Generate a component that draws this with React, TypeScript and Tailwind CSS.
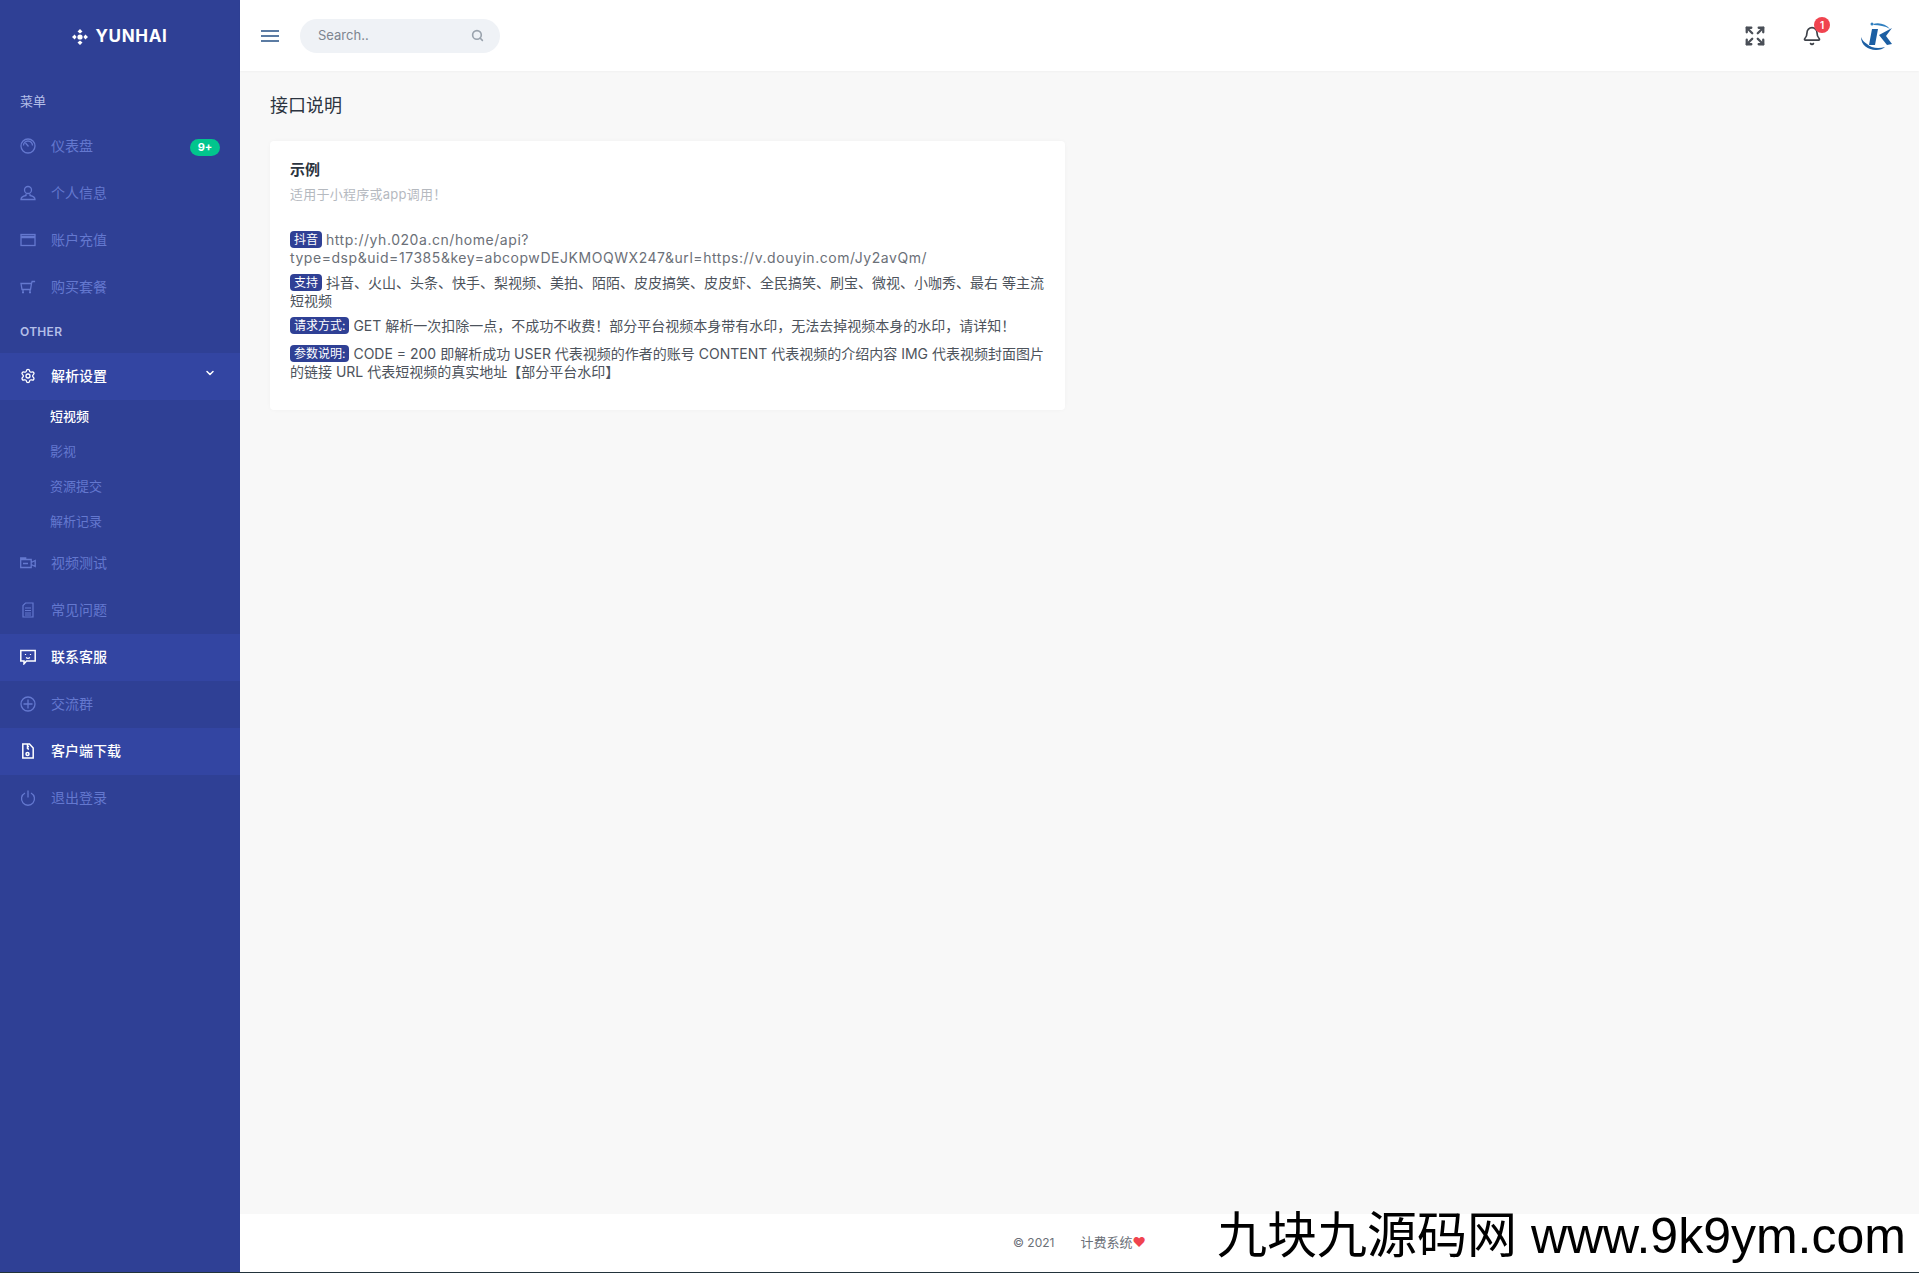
import { Bell, ChevronDown, Expand, Search, Settings } from 'lucide-react';

const sans = 'font-["Inter","Noto_Sans_CJK_SC",sans-serif]';

type IconProps = { className?: string };

const Meter = ({ className }: IconProps) => (
  <svg viewBox="0 0 16 16" fill="none" stroke="currentColor" strokeWidth="1.300" className={className}>
    <circle cx="8" cy="8" r="7" />
    <path d="M3.500 7.500a4.500 4.500 0 0 1 9 0M8.500 8.500L5.500 5" />
  </svg>
);
const User = ({ className }: IconProps) => (
  <svg viewBox="0 0 16 16" fill="none" stroke="currentColor" strokeWidth="1.300" className={className}>
    <circle cx="8" cy="5" r="3.500" />
    <path d="M6 9v1.500c-2.500.5-5 1.500-5 4h14c0-2.500-2.500-3.500-5-4V9" />
  </svg>
);
const Card = ({ className }: IconProps) => (
  <svg viewBox="0 0 16 16" fill="none" stroke="currentColor" strokeWidth="1.300" className={className}>
    <rect x="1" y="2.500" width="14" height="11" />
    <path d="M1 5h14" strokeWidth="2.500" />
  </svg>
);
const Cart = ({ className }: IconProps) => (
  <svg viewBox="0 0 16 16" fill="none" stroke="currentColor" strokeWidth="1.300" className={className}>
    <path d="M1 4.500h10.500l-1 6h-8.500zM11.500 4.500l.6-2h3M3 10.500v3M10 10.500v3M2 13.500h2M9 13.500h2" />
  </svg>
);
const Video = ({ className }: IconProps) => (
  <svg viewBox="0 0 16 16" fill="none" stroke="currentColor" strokeWidth="1.300" className={className}>
    <path d="M.7 4.500h10.500v8H.7zM.7 4.500V3h5v1.500M11.200 7.500l4-2v6l-4-2M3 8.500h5" />
  </svg>
);
const Doc = ({ className }: IconProps) => (
  <svg viewBox="0 0 16 16" fill="none" stroke="currentColor" strokeWidth="1.200" className={className}>
    <path d="M5.500 1h7.500v14H3V3.500zM5 6h6M5 8.500h6M5 11h6M5 13h6" />
  </svg>
);
const Chat = ({ className }: IconProps) => (
  <svg viewBox="0 0 16 16" fill="none" stroke="currentColor" strokeWidth="1.500" className={className}>
    <path d="M.8 1.500h14.400v10.500H6.500l-2.500 2.800V12H.8z" />
    <path d="M5.500 5v1M10.500 5v1M6 8.500c1 .8 3 .8 4 0" strokeWidth="1.200" />
  </svg>
);
const Plus = ({ className }: IconProps) => (
  <svg viewBox="0 0 16 16" fill="none" stroke="currentColor" strokeWidth="1.300" className={className}>
    <circle cx="8" cy="8" r="7" />
    <path d="M8 3.500v9M3.500 8h9" />
  </svg>
);
const FileDown = ({ className }: IconProps) => (
  <svg viewBox="0 0 16 16" fill="none" stroke="currentColor" strokeWidth="1.500" className={className}>
    <path d="M2.800 1h6.700l3.700 4v10H2.800z" />
    <path d="M7.500 1v5M7.500 3.500h1.500M7.500 6h1.500" />
    <circle cx="7.500" cy="11" r="1.500" />
  </svg>
);
const Power = ({ className }: IconProps) => (
  <svg viewBox="0 0 16 16" fill="none" stroke="currentColor" strokeWidth="1.300" className={className}>
    <path d="M5 3a6.500 6.500 0 1 0 6 0M8 .5V7.500" />
  </svg>
);

function Item({ icon: Icon, label, active, badge }: { icon: any; label: string; active?: boolean; badge?: string }) {
  return (
    <div className={`flex items-center h-[47px] px-5 text-[14px] ${active ? 'bg-[#3345a2] text-white font-medium' : 'text-[#6478cf]'}`}>
      <Icon className="w-[16px] h-[16px] mr-[15px] mb-[1px] shrink-0" />
      <span className="flex-1 mb-[2px]">{label}</span>
      {badge && (
        <span className="h-[17px] w-[30px] mt-0.5 rounded-full bg-[#02c58d] text-white text-[11px] font-bold leading-[17px] text-center">{badge}</span>
      )}
    </div>
  );
}

function Tag({ children }: { children: string }) {
  return <span className="inline-block px-1 h-[17px] leading-[17px] rounded-[4px] bg-[#2f4095] text-white text-[12px] align-[1px]">{children}</span>;
}

export default function App() {
  return (
    <div className={`flex flex-col w-[1919px] h-[1273px] overflow-hidden bg-[#f8f8f8] ${sans}`}>
      <div className="flex-1 flex min-h-0">
        <aside className="w-[240px] shrink-0 bg-[#2f4095] flex flex-col">
          <div className="h-[71px] pt-[2px] flex items-center justify-center gap-[7px] text-white font-bold text-[17px] tracking-[0.7px]">
            <svg viewBox="0 0 16 16" className="w-[16px] h-[16px]" fill="currentColor">
              <path d="M8 0l2.500 2.600L8 4.600 5.500 2.600zM8 16l-2.500-2.600L8 11.400l2.500 2zM0 8l2.600-2.500L4.600 8l-2 2.500zM16 8l-2.600 2.500L11.400 8l2-2.500z" />
              <circle cx="8" cy="8" r="2.600" />
            </svg>
            YUNHAI
          </div>
          <div className="h-[52px] pt-[20px] pl-5 text-[13px] leading-5 text-[#b4bfe8]">菜单</div>
          <Item icon={Meter} label="仪表盘" badge="9+" />
          <Item icon={User} label="个人信息" />
          <Item icon={Card} label="账户充值" />
          <Item icon={Cart} label="购买套餐" />
          <div className="h-[42px] pt-[11px] pl-5 text-[12px] leading-5 font-semibold tracking-[0.3px] text-[#b4bfe8]">OTHER</div>
          <div className="relative">
            <Item icon={Settings} label="解析设置" active />
            <ChevronDown className="absolute right-[24px] top-[14px] w-[12px] h-[12px] text-white" strokeWidth={3} />
          </div>
          <div className="pl-[50px] text-[13px] text-[#6478cf] flex flex-col">
            <div className="h-[35px] leading-[32px] text-white font-medium">短视频</div>
            <div className="h-[35px] leading-[32px]">影视</div>
            <div className="h-[35px] leading-[32px]">资源提交</div>
            <div className="h-[35px] leading-[32px]">解析记录</div>
          </div>
          <Item icon={Video} label="视频测试" />
          <Item icon={Doc} label="常见问题" />
          <Item icon={Chat} label="联系客服" active />
          <Item icon={Plus} label="交流群" />
          <Item icon={FileDown} label="客户端下载" active />
          <Item icon={Power} label="退出登录" />
        </aside>
        <div className="flex-1 flex flex-col min-w-0">
          <header className="h-[71px] shrink-0 bg-white flex items-center pl-[21px] pr-[25px] shadow-[0_1px_2px_rgba(0,0,0,0.03)]">
            <svg viewBox="0 0 18 12" className="w-[18px] h-[12px]" fill="#5b7ba3">
              <rect width="18" height="2" />
              <rect y="5" width="18" height="2" />
              <rect y="10" width="18" height="2" />
            </svg>
            <div className="ml-[21px] w-[200px] h-[34px] rounded-full bg-[#eff2f6] flex items-center justify-between pl-[18px] pr-[16px] text-[13px] text-[#7d8590]">
              Search..
              <Search className="w-[13px] h-[13px] text-[#9aa3ad]" strokeWidth={3} />
            </div>
            <div className="ml-auto flex items-center">
              <Expand className="w-[22px] h-[22px] text-[#4a4f57]" strokeWidth={2.500} />
              <div className="relative ml-[36px]">
                <Bell className="w-[20px] h-[20px] text-[#3d4148]" />
                <span className="absolute -right-[8px] -top-[9px] w-[16px] h-[16px] rounded-full bg-[#f0444f] text-white text-[10px] font-semibold leading-[16px] text-center">1</span>
              </div>
              <svg viewBox="0 0 34 32" className="ml-[38px] w-[34px] h-[32px]">
                <path d="M1 17c0 8 7 13 15 13 4 0 7-1 9-3-7 2-14 1-18-3-3-2-5-4-6-7z" fill="#1c5fa3" />
                <path d="M12 9h6l-3 16H9z" fill="#1c5fa3" />
                <path d="M19 15l13-7-6 8 6 8-5 1z" fill="#1c5fa3" />
                <path d="M13 4c6-2 13 0 17 5-5-3-11-4-16-4z" fill="#2f7fc0" />
                <circle cx="12" cy="4" r="1.500" fill="#2f7fc0" />
              </svg>
            </div>
          </header>
          <main className="flex-1 px-[30px] pt-[23px]">
            <h1 className="text-[18px] leading-[24px] text-[#2c3440]">接口说明</h1>
            <div className="mt-[23px] w-[795px] h-[269px] rounded-[4px] bg-white shadow-[0_0_4px_rgba(0,0,0,0.03)] px-[20px] pt-[19px] text-[14px] leading-[18px] text-[#4d535c]">
              <h2 className="text-[15px] font-semibold text-[#2c3440] leading-[20px]">示例</h2>
              <p className="mt-[4px] text-[13px] tracking-[0.25px] leading-[20px] text-[#b5b9bf] mb-[27px]">适用于小程序或app调用！</p>
              <p className="mb-[7px]">
                <Tag>抖音</Tag> <span className="text-[#6b7078] tracking-[0.55px]">http://yh.020a.cn/home/api?type=dsp&amp;uid=17385&amp;key=abcopwDEJKMOQWX247&amp;url=https://v.douyin.com/Jy2avQm/</span>
              </p>
              <p className="mb-[7px]"><Tag>支持</Tag> 抖音、火山、头条、快手、梨视频、美拍、陌陌、皮皮搞笑、皮皮虾、全民搞笑、刷宝、微视、小咖秀、最右 等主流短视频</p>
              <p className="mb-[10px]"><Tag>请求方式:</Tag> GET 解析一次扣除一点，不成功不收费！部分平台视频本身带有水印，无法去掉视频本身的水印，请详知！</p>
              <p><Tag>参数说明:</Tag> CODE = 200 即解析成功 USER 代表视频的作者的账号 CONTENT 代表视频的介绍内容 IMG 代表视频封面图片的链接 URL 代表短视频的真实地址【部分平台水印】</p>
            </div>
          </main>
          <footer className="relative h-[58px] shrink-0 bg-white flex items-center pl-[773px] text-[13px] text-[#6b7078]">
            <span className="text-[12px]">© 2021</span>
            <span className="ml-[26px]">计费系统</span>
            <span className="text-[#f0444f]">♥</span>
            <span className="absolute left-[977px] top-[-8px] whitespace-nowrap text-black text-[50px] leading-[60px] font-['Liberation_Sans','Noto_Sans_CJK_SC',sans-serif]">九块九源码网 www.9k9ym.com</span>
          </footer>
        </div>
      </div>
      <div className="h-px shrink-0 bg-[#22333b]" />
    </div>
  );
}
